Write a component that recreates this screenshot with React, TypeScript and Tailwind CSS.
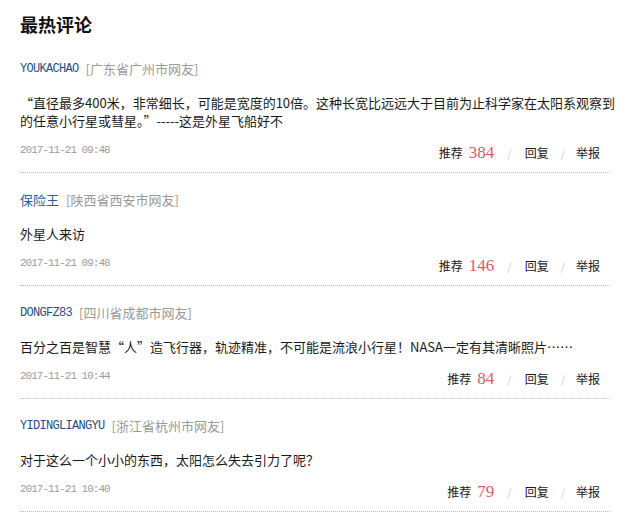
import React from "react";

type Comment = {
  user: string;
  place: string;
  text: string;
  time: string;
  votes: number;
};

const comments: Comment[] = [
  {
    user: "YOUKACHAO",
    place: "广东省广州市网友",
    text: "“直径最多400米，非常细长，可能是宽度的10倍。这种长宽比远远大于目前为止科学家在太阳系观察到的任意小行星或彗星。”-----这是外星飞船好不",
    time: "2017-11-21 09:48",
    votes: 384,
  },
  {
    user: "保险王",
    place: "陕西省西安市网友",
    text: "外星人来访",
    time: "2017-11-21 09:48",
    votes: 146,
  },
  {
    user: "DONGFZ83",
    place: "四川省成都市网友",
    text: "百分之百是智慧“人”造飞行器，轨迹精准，不可能是流浪小行星！NASA一定有其清晰照片……",
    time: "2017-11-21 10:44",
    votes: 84,
  },
  {
    user: "YIDINGLIANGYU",
    place: "浙江省杭州市网友",
    text: "对于这么一个小小的东西，太阳怎么失去引力了呢？",
    time: "2017-11-21 10:40",
    votes: 79,
  },
];

const cjk = { fontFamily: "'Noto Sans CJK SC', 'Noto Sans', sans-serif" };
const mono = { fontFamily: "'Liberation Mono', 'Noto Sans CJK SC', monospace" };

function isLatin(s: string) {
  return /^[A-Za-z0-9]+$/.test(s);
}

export default function App() {
  return (
    <div className="w-[640px] h-[519px] overflow-hidden bg-white px-[20px] pt-[12px]" style={cjk}>
      <h2 className="text-[18px] leading-[24px] font-bold text-[#111]">最热评论</h2>

      <div className="mt-[6px] w-[590px]">
        {comments.map((c) => (
          <div key={c.user} className="pt-[17px] pb-[7px] border-b border-dotted border-[#bdbdbd]">
            {/* user + location */}
            <div className="flex items-center h-[20px] leading-[20px] text-[13px]">
              {isLatin(c.user) ? (
                <span className="text-[12px] tracking-[-0.7px] text-[#1f4f86]" style={mono}>
                  {c.user}
                </span>
              ) : (
                <span className="text-[#23619f]">{c.user}</span>
              )}
              <span className="ml-[7px] text-[#9a9a9a]">[{c.place}]</span>
            </div>

            {/* body */}
            <p className="mt-[15px] -mr-[6px] text-[13px] leading-[18px] text-[#1a1a1a]">{c.text}</p>

            {/* meta */}
            <div className="mt-[11px] flex justify-between h-[24px] pr-[10px]">
              <span
                className="self-start text-[11px] leading-[18px] tracking-[-1px] text-[#9c9c9c]"
                style={mono}
              >
                {c.time}
              </span>
              <div className="flex items-center h-[24px] text-[12px] text-[#1a1a1a]">
                <span>推荐</span>
                <span
                  className="ml-[6px] text-[17px] text-[#df5a5e]"
                  style={{ fontFamily: "'Liberation Serif', serif" }}
                >
                  {c.votes}
                </span>
                <span className="mx-[13px] text-[11px] text-[#d0d0d0]">/</span>
                <span>回复</span>
                <span className="ml-[12px] mr-[11px] text-[11px] text-[#d0d0d0]">/</span>
                <span>举报</span>
              </div>
            </div>
          </div>
        ))}
      </div>
    </div>
  );
}
